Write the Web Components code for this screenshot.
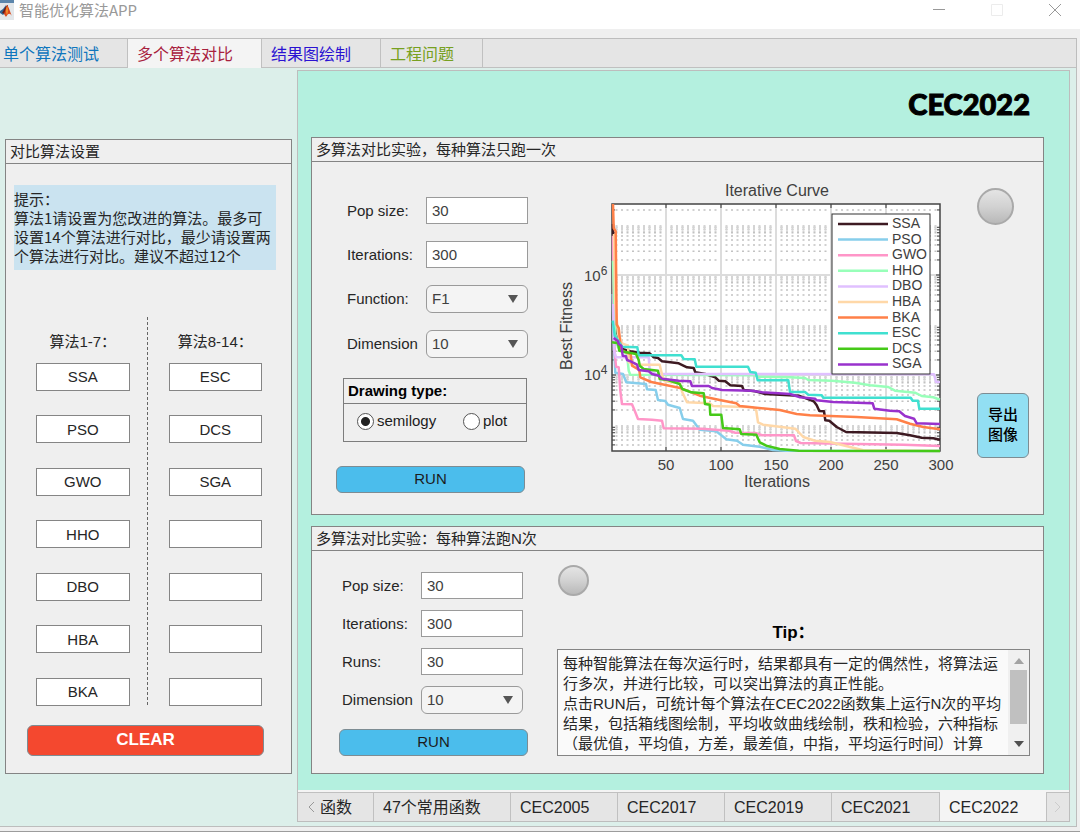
<!DOCTYPE html>
<html lang="zh-CN">
<head>
<meta charset="utf-8">
<title>智能优化算法APP</title>
<style>
  body {
    margin: 0;
    background: #efefef;
    color: #262626;
    font: 15px/20px "Liberation Sans", "Noto Sans CJK SC", sans-serif;
  }
</style>
</head>
<body>
<app-window caption="智能优化算法APP">
  <tab-strip slot="tabs" label="功能">
    <tab-item color="#0f76bd" wide="128">单个算法测试</tab-item>
    <tab-item color="#a8213d" wide="134" selected>多个算法对比</tab-item>
    <tab-item color="#2a12d2" wide="119">结果图绘制</tab-item>
    <tab-item color="#77a020" wide="102">工程问题</tab-item>
  </tab-strip>

  <titled-panel slot="side" caption="对比算法设置">
    <algorithm-settings></algorithm-settings>
  </titled-panel>

  <suite-page caption="CEC2022">
    <titled-panel caption="多算法对比实验，每种算法只跑一次">
      <single-run></single-run>
    </titled-panel>
    <titled-panel caption="多算法对比实验：每种算法跑N次">
      <repeated-run></repeated-run>
    </titled-panel>
    <tab-strip slot="tabs" label="函数集" bottom>
      <tab-item wide="54" tight>函数</tab-item>
      <tab-item wide="137">47个常用函数</tab-item>
      <tab-item wide="107">CEC2005</tab-item>
      <tab-item wide="107">CEC2017</tab-item>
      <tab-item wide="107">CEC2019</tab-item>
      <tab-item wide="108">CEC2021</tab-item>
      <tab-item wide="107" selected>CEC2022</tab-item>
    </tab-strip>
  </suite-page>
</app-window>

<script>
class AppWindow extends HTMLElement {
  constructor() {
    super();
    this.attachShadow({ mode: 'open' });
    this.shadowRoot.innerHTML = `
      <style>
        :host {
          display: flex;
          flex-direction: column;
          min-height: 100vh;
          box-sizing: border-box;
          border-bottom: 1px solid #9c9c9c;
        }
        header {
          display: flex;
          align-items: center;
          height: 29px;
          padding-bottom: 10px;
          box-sizing: border-box;
          background: #fff;
          color: #999;
        }
        .logo { width: 14px; height: 20px; margin-right: 5px; }
        h1 {
          flex: 1;
          margin: 0;
          font: 15px/20px "Noto Sans CJK SC", sans-serif;
        }
        .controls { display: flex; gap: 12px; padding-right: 2px; }
        button {
          width: 46px;
          height: 20px;
          padding: 0;
          border: 0;
          background: none;
          color: #999;
        }
        button[disabled] { color: #ececec; }
        button svg { display: block; margin: auto; }
        main {
          flex: 1;
          display: flex;
          flex-direction: column;
          margin: 9px 3px 4px 0;
          border: 1px solid #bdbdbd;
          border-left: 0;
          background: #dcefea;
        }
        .columns {
          flex: 1;
          display: grid;
          grid-template-columns: 287px minmax(0, 1fr);
          gap: 5px;
          padding: 2px 6px 4px 5px;
        }
        .side { display: flex; padding: 69px 0 48px; }
        .side ::slotted(*) { flex: 1; }
      </style>
      <header>
        <svg class="logo" viewBox="0 0 14 20">
          <rect width="14" height="20" fill="#e3e7ea"/>
          <rect width="14" height="3" fill="#5c86ac"/>
          <path d="M0 11 3 9 6 5 5 13 3 15 0 13z" fill="#2f6694"/>
          <path d="M2 13 6 6 8 5 7 16 5 14z" fill="#6d1a14"/>
          <path d="M7 5C9 7 10 12 12 16 10 13 8 13 6 17L4 14z" fill="#d9481c"/>
          <path d="M7 6C8 9 8 12 7 15 6 13 6 9 7 6z" fill="#f8a633"/>
        </svg>
        <h1></h1>
        <div class="controls">
          <button aria-label="最小化"><svg width="12" height="12" stroke="currentColor"><path d="M0 5.500H12"/></svg></button>
          <button aria-label="最大化" disabled><svg width="12" height="12" fill="none" stroke="currentColor"><path d="M.5.5h11v11H.5z"/></svg></button>
          <button aria-label="关闭"><svg width="12" height="12" stroke="currentColor"><path d="M0 0 12 12M12 0 0 12"/></svg></button>
        </div>
      </header>
      <main>
        <slot name="tabs"></slot>
        <div class="columns">
          <div class="side"><slot name="side"></slot></div>
          <slot></slot>
        </div>
      </main>
    `;
    this.shadowRoot.querySelector('h1').textContent = this.getAttribute('caption');
  }
}

class TabStrip extends HTMLElement {
  constructor() {
    super();
    this.attachShadow({ mode: 'open' });
    const bottom = this.hasAttribute('bottom');
    this.shadowRoot.innerHTML = `
      <style>
        :host {
          display: flex;
          height: 29px;
          background: #e5e5e5;
          box-shadow: inset 0 -1px #c0c0c0;
        }
        :host([bottom]) {
          border-top: 2px solid #f4f4f4;
          box-shadow: inset 0 1px #c0c0c0;
        }
        .tabs { display: flex; flex: 1; min-width: 0; }
        .scroll {
          width: 22px;
          padding: 0;
          border: 0;
          background: none;
          color: #999;
        }
        .scroll svg { display: block; margin: auto; }
        .scroll:first-of-type svg { margin-right: 4px; }
        .scroll[disabled] { color: #ccc; }
        .scroll[disabled] svg { margin: auto; }
      </style>
      ${bottom ? '<button class="scroll" aria-label="向左"><svg width="8" height="12" fill="none" stroke="currentColor"><path d="M6 1 1 6l5 5"/></svg></button>' : ''}
      <div class="tabs" role="tablist"><slot></slot></div>
      ${bottom ? '<button class="scroll" aria-label="向右" disabled><svg width="8" height="12" fill="none" stroke="currentColor"><path d="M1 1l5 5-5 5"/></svg></button>' : ''}
    `;
    this.shadowRoot.querySelector('.tabs').setAttribute('aria-label', this.getAttribute('label'));
  }

  connectedCallback() {
    this.addEventListener('click', (e) => {
      const tab = e.target.closest('tab-item');
      if (!tab) return;
      this.querySelectorAll('tab-item').forEach((item) => item.toggleAttribute('selected', item === tab));
    });
  }
}

class TabItem extends HTMLElement {
  constructor() {
    super();
    this.attachShadow({ mode: 'open' });
    this.shadowRoot.innerHTML = `
      <style>
        :host { display: flex; min-width: 0; }
        button {
          flex: 1;
          padding: 2px 9px 0;
          border: 0;
          border-right: 1px solid #c0c0c0;
          background: none;
          color: #262626;
          font: 16px/27px "Liberation Sans", "Noto Sans CJK SC", sans-serif;
          text-align: left;
          white-space: nowrap;
        }
        :host(:first-child) button { padding-left: 3px; }
        :host([tight]) button { padding-left: 0; }
        :host([selected]) button { background: #f4f4f4; }
      </style>
      <button role="tab"><slot></slot></button>
    `;
    this.button = this.shadowRoot.querySelector('button');
    this.button.style.color = this.getAttribute('color') || '';
    this.style.flexBasis = this.getAttribute('wide') + 'px';
    this.button.setAttribute('aria-selected', this.hasAttribute('selected'));
  }

  static get observedAttributes() {
    return ['selected'];
  }

  attributeChangedCallback() {
    this.button.setAttribute('aria-selected', this.hasAttribute('selected'));
  }
}

class SuitePage extends HTMLElement {
  constructor() {
    super();
    this.attachShadow({ mode: 'open' });
    this.shadowRoot.innerHTML = `
      <style>
        :host {
          display: flex;
          flex-direction: column;
          border: 1px solid #bdbdbd;
          background: #b4f0df;
        }
        h2 {
          margin: 0;
          padding: 17px 39px 17px 0;
          color: #000;
          font: 900 29px/32px Lato, sans-serif;
          text-align: right;
          -webkit-text-stroke: 1px #000;
        }
        .stack {
          flex: 1;
          display: flex;
          flex-direction: column;
          gap: 11px;
          padding: 0 25px 16px 13px;
        }
      </style>
      <h2></h2>
      <div class="stack"><slot></slot></div>
      <slot name="tabs"></slot>
    `;
    this.shadowRoot.querySelector('h2').textContent = this.getAttribute('caption');
  }
}

class TitledPanel extends HTMLElement {
  constructor() {
    super();
    this.attachShadow({ mode: 'open' });
    this.shadowRoot.innerHTML = `
      <style>
        :host {
          display: flex;
          flex-direction: column;
          border: 1px solid #848484;
          background: #efefef;
        }
        h3 {
          margin: 0;
          padding-left: 4px;
          border-bottom: 1px solid #848484;
          font: 15px/23px "Liberation Sans", "Noto Sans CJK SC", sans-serif;
        }
        ::slotted(*) { flex: 1; }
      </style>
      <h3></h3>
      <slot></slot>
    `;
    this.shadowRoot.querySelector('h3').textContent = this.getAttribute('caption');
  }
}

class AlgorithmSettings extends HTMLElement {
  constructor() {
    super();
    this.attachShadow({ mode: 'open' });
    this.shadowRoot.innerHTML = `
      <style>
        :host { display: flex; flex-direction: column; }
        p {
          margin: 21px 15px 0 8px;
          padding: 4px 0 5px;
          background: #cae3f0;
          font: 15px/19px "Noto Sans CJK SC", sans-serif;
        }
        .lists {
          flex: 1;
          display: grid;
          grid-template-columns: minmax(0, 1fr) auto minmax(0, 1fr);
          margin: 47px 29px 0 30px;
        }
        .divider {
          width: 1px;
          margin: 0 21px 0 17px;
          background: repeating-linear-gradient(#666 0 3px, transparent 3px 5px);
        }
        action-button { height: 31px; margin: 18px 27px 17px 21px; }
      </style>
      <p>提示：<br>算法1请设置为您改进的算法。最多可设置14个算法进行对比，最少请设置两个算法进行对比。建议不超过12个</p>
      <div class="lists">
        <algorithm-list label="算法1-7：" names="SSA,PSO,GWO,HHO,DBO,HBA,BKA"></algorithm-list>
        <div class="divider"></div>
        <algorithm-list label="算法8-14：" names="ESC,DCS,SGA,,,,"></algorithm-list>
      </div>
      <action-button kind="clear">CLEAR</action-button>
    `;
    this.shadowRoot.querySelector('action-button').addEventListener('click', () => {
      this.shadowRoot.querySelectorAll('algorithm-list').forEach((list) => list.clear());
    });
  }
}

class AlgorithmList extends HTMLElement {
  connectedCallback() {
    if (this.shadowRoot) return;
    this.attachShadow({ mode: 'open' });
    const label = this.getAttribute('label');
    const inputs = this.getAttribute('names').split(',')
      .map((name, i) => `<input value="${name}" aria-label="${label}${i + 1}">`)
      .join('');
    this.shadowRoot.innerHTML = `
      <style>
        :host {
          display: flex;
          flex-direction: column;
          justify-content: space-between;
          padding: 15px 0 1px;
        }
        span { margin-bottom: -14px; text-align: center; white-space: nowrap; }
        input {
          width: 100%;
          height: 28px;
          box-sizing: border-box;
          border: 1px solid #858585;
          background: #fff;
          color: #262626;
          font: inherit;
          text-align: center;
        }
      </style>
      <span>${label}</span>
      ${inputs}
    `;
  }

  clear() {
    this.shadowRoot.querySelectorAll('input').forEach((input) => { input.value = ''; });
  }
}

class ActionButton extends HTMLElement {
  constructor() {
    super();
    this.attachShadow({ mode: 'open' });
    this.shadowRoot.innerHTML = `
      <style>
        :host { display: flex; height: 27px; }
        button {
          flex: 1;
          padding: 0 0 2px;
          border: 1px solid #7d8c93;
          border-radius: 6px;
          background: #4bbdec;
          color: #1c1c1c;
          font: inherit;
        }
        :host([kind=clear]) button {
          background: #f4482f;
          color: #fff;
          font-weight: bold;
          font-size: 17px;
        }
        :host([kind=export]) button { background: #92dff3; color: #000; font-weight: 500; }
      </style>
      <button><slot></slot></button>
    `;
  }
}

class FormField extends HTMLElement {
  connectedCallback() {
    if (this.shadowRoot) return;
    this.attachShadow({ mode: 'open' });
    const value = this.getAttribute('value');
    const control = this.hasAttribute('options')
      ? `<select id="control">${this.getAttribute('options').split(',').map((o) => `<option>${o}</option>`).join('')}</select>
         <svg width="12" height="10" viewBox="0 0 12 10"><path d="M1 1h10L6 9z" fill="#555"/></svg>`
      : `<input id="control" value="${value}">`;
    this.shadowRoot.innerHTML = `
      <style>
        :host {
          display: grid;
          grid-template-columns: 79px minmax(0, 1fr);
          align-items: center;
        }
        .control { position: relative; }
        input, select {
          display: block;
          width: 100%;
          height: 27px;
          padding: 0 5px;
          box-sizing: border-box;
          border: 1px solid #9a9a9a;
          background: #fff;
          color: #404040;
          font: inherit;
        }
        select {
          height: 28px;
          appearance: none;
          border-radius: 6px;
          background: #f4f4f4;
        }
        svg { position: absolute; top: 9px; right: 9px; pointer-events: none; }
      </style>
      <label for="control">${this.getAttribute('label')}</label>
      <div class="control">${control}</div>
    `;
  }
}

class StatusLamp extends HTMLElement {
  constructor() {
    super();
    this.attachShadow({ mode: 'open' });
    this.shadowRoot.innerHTML = `
      <style>
        :host {
          display: block;
          width: 31px;
          height: 31px;
          box-sizing: border-box;
          border: 2px solid #a9a9a9;
          border-radius: 50%;
          background: linear-gradient(#e4e4e4, #d2d2d2 50%, #b9b9b9);
        }
        :host([large]) { width: 37px; height: 37px; }
      </style>
    `;
  }
}

class DrawingType extends HTMLElement {
  constructor() {
    super();
    this.attachShadow({ mode: 'open' });
    this.shadowRoot.innerHTML = `
      <style>
        :host { display: block; border: 1px solid #7d7d7d; color: #1c1c1c; }
        #title {
          padding-left: 4px;
          border-bottom: 1px solid #7d7d7d;
          color: #000;
          font-weight: bold;
          line-height: 24px;
        }
        .options {
          display: grid;
          grid-template-columns: 106px auto;
          height: 34px;
          padding: 0 0 3px 13px;
        }
        label { display: flex; align-items: center; gap: 3px; }
        input {
          appearance: none;
          width: 17px;
          height: 17px;
          margin: 0;
          border: 1px solid #555;
          border-radius: 50%;
          background: #fff;
        }
        input:checked { background: radial-gradient(circle, #222 4px, #fff 5px); }
      </style>
      <div id="title">Drawing type:</div>
      <div class="options" role="radiogroup" aria-labelledby="title">
        <label><input type="radio" name="type" checked>semilogy</label>
        <label><input type="radio" name="type">plot</label>
      </div>
    `;
  }
}

class SingleRun extends HTMLElement {
  constructor() {
    super();
    this.attachShadow({ mode: 'open' });
    this.shadowRoot.innerHTML = `
      <style>
        :host {
          display: grid;
          grid-template-columns: 192px minmax(0, 1fr) 52px;
          padding: 18px 14px 21px 24px;
        }
        .fields { display: grid; gap: 17px; padding: 17px 0 0 11px; }
        drawing-type { margin: 20px 1px 24px 7px; }
        .form action-button { margin-right: 3px; }
        fitness-chart { margin: 0 25px 0 24px; }
        .side {
          display: flex;
          flex-direction: column;
          justify-content: space-between;
          padding: 8px 0 35px;
        }
        .side action-button { height: 65px; }
      </style>
      <div class="form">
        <div class="fields">
          <form-field label="Pop size:" value="30"></form-field>
          <form-field label="Iterations:" value="300"></form-field>
          <form-field label="Function:" options="F1"></form-field>
          <form-field label="Dimension" options="10"></form-field>
        </div>
        <drawing-type></drawing-type>
        <action-button>RUN</action-button>
      </div>
      <fitness-chart></fitness-chart>
      <div class="side">
        <status-lamp large></status-lamp>
        <action-button kind="export">导出<br>图像</action-button>
      </div>
    `;
  }
}

class RepeatedRun extends HTMLElement {
  constructor() {
    super();
    this.attachShadow({ mode: 'open' });
    this.shadowRoot.innerHTML = `
      <style>
        :host {
          display: grid;
          grid-template-columns: 189px minmax(0, 1fr);
          gap: 29px;
          padding: 14px 13px 17px 27px;
        }
        .fields { display: grid; gap: 11px; padding: 7px 5px 15px 3px; }
        .tip { display: flex; flex-direction: column; }
        status-lamp { margin-left: 1px; }
        label {
          margin: 25px 0 4px;
          color: #000;
          font-weight: bold;
          font-size: 17px;
          line-height: 24px;
          text-align: center;
        }
        .box {
          flex: 1;
          display: flex;
          border: 1px solid #848484;
          background: #fafafa;
        }
        textarea {
          flex: 1;
          min-width: 0;
          padding: 4px 0 0 5px;
          border: 0;
          background: none;
          color: #262626;
          font: 15px/20px "Liberation Sans", "Noto Sans CJK SC", sans-serif;
          overflow: hidden;
          resize: none;
        }
        .scrollbar {
          display: flex;
          flex-direction: column;
          align-items: center;
          width: 21px;
          padding: 8px 0;
          box-sizing: border-box;
          background: #f0f0f0;
        }
        .thumb { width: 17px; height: 54px; margin: 6px 0 auto; background: #c0c0c0; }
      </style>
      <div class="form">
        <div class="fields">
          <form-field label="Pop size:" value="30"></form-field>
          <form-field label="Iterations:" value="300"></form-field>
          <form-field label="Runs:" value="30"></form-field>
          <form-field label="Dimension" options="10"></form-field>
        </div>
        <action-button>RUN</action-button>
      </div>
      <div class="tip">
        <status-lamp></status-lamp>
        <label for="note">Tip：</label>
        <div class="box">
          <textarea id="note" rows="5" readonly>每种智能算法在每次运行时，结果都具有一定的偶然性，将算法运行多次，并进行比较，可以突出算法的真正性能。
点击RUN后，可统计每个算法在CEC2022函数集上运行N次的平均结果，包括箱线图绘制，平均收敛曲线绘制，秩和检验，六种指标（最优值，平均值，方差，最差值，中指，平均运行时间）计算</textarea>
          <div class="scrollbar">
            <svg width="10" height="6"><path d="M0 6h10L5 0z" fill="#a3a3a3"/></svg>
            <div class="thumb"></div>
            <svg width="10" height="6"><path d="M0 0h10L5 6z" fill="#505050"/></svg>
          </div>
        </div>
      </div>
    `;
  }
}

// Curve points are kept in thirds of a plot unit, from the top left of the axes
const SCALE = 3;
const PLOT = { x: 60, y: 24, width: 328, height: 247 };
const SERIES = [
  { name: 'SSA', color: '#3d1a22', points: '3,60 6,330 14,415 30,435 55,442 83,446 113,448 125,460 138,462 150,472 200,478 225,490 245,492 250,505 280,510 310,520 320,530 340,532 355,544 390,546 395,558 430,562 460,570 560,575 584,584 605,592 614,604 622,621 636,622 640,649 652,650 674,669 702,684 854,687 894,694 929,701 964,703 984,707' },
  { name: 'PSO', color: '#87ceeb', points: '2,270 5,400 10,506 33,510 43,535 102,540 105,556 131,558 138,588 160,591 168,602 203,612 213,645 243,650 263,677 313,682 343,706 375,710 393,722 443,728 483,738 520,740 984,741' },
  { name: 'GWO', color: '#ff96c8', points: '3,95 6,420 12,488 20,490 25,560 30,600 60,601 68,620 78,645 120,647 150,650 155,673 270,674 350,680 370,686 430,687 450,694 546,694 552,711 566,717 694,719 874,722 984,726' },
  { name: 'HHO', color: '#98ffb9', points: '3,170 6,280 10,390 18,430 45,450 50,500 55,512 430,514 440,518 534,520 579,522 589,528 660,530 729,536 774,544 829,549 849,560 909,566 929,576 964,580 984,587' },
  { name: 'DBO', color: '#e0c0ff', points: '4,300 6,440 12,460 110,460 113,500 132,510 966,511 972,534 984,534' },
  { name: 'HBA', color: '#ffd8a8', points: '6,90 10,300 18,385 30,418 48,425 50,475 78,482 143,482 151,515 158,532 203,538 211,565 225,595 293,598 303,606 423,610 433,620 438,655 453,662 503,668 550,674 574,699 609,710 654,714 714,729 754,739 984,741' },
  { name: 'BKA', color: '#ff8048', points: '3,0 5,72 11,82 14,362 20,372 27,440 40,444 56,450 60,485 82,498 85,520 118,534 208,553 263,575 323,588 373,598 383,606 503,618 554,630 594,634 734,639 854,646 894,659 934,669 984,676' },
  { name: 'ESC', color: '#40e0d0', points: '2,350 8,395 20,412 30,428 76,430 80,454 208,454 215,465 248,466 253,488 408,488 415,504 431,506 437,529 529,529 534,564 579,564 589,572 629,574 634,581 896,581 902,590 918,590 922,614 984,614' },
  { name: 'DCS', color: '#45c918', points: '0,415 18,418 22,440 40,444 72,450 80,468 83,485 95,495 138,500 143,525 168,528 203,540 211,555 238,565 275,568 279,600 293,602 295,632 328,632 333,672 383,676 388,690 433,692 443,715 463,725 503,735 560,740 984,741' },
  { name: 'SGA', color: '#9932cc', points: '5,402 18,412 20,420 28,425 32,455 42,457 45,468 58,473 75,482 80,498 110,502 120,510 140,515 150,524 200,530 235,532 240,546 290,546 300,552 330,558 420,560 450,565 534,570 564,580 609,584 614,589 664,594 782,598 787,614 834,620 862,622 879,636 906,644 914,658 984,660' }
];

class FitnessChart extends HTMLElement {
  constructor() {
    super();
    this.attachShadow({ mode: 'open' });
    this.shadowRoot.innerHTML = `
      <style>
        :host { display: block; }
        svg { display: block; width: 100%; overflow: visible; }
        text { fill: #404040; font-family: "Liberation Sans", sans-serif; font-size: 15px; }
        .title { font-size: 16px; text-anchor: middle; }
        .tick { text-anchor: middle; }
        .power { font-size: 12px; }
        .legend { font-size: 14px; }
        .major { stroke: #dcdcdc; stroke-width: 2; }
        .dots { stroke: #c2c2c2; stroke-width: 1.5; stroke-dasharray: 2 3.5; }
        .dense { stroke: #d4d4d4; stroke-width: 2; stroke-dasharray: 5 1; }
        .frame { fill: none; stroke: #444; stroke-width: 1.5; }
        polyline { fill: none; stroke-width: 2.5; stroke-linejoin: round; }
      </style>
      <svg viewBox="0 0 400 310" role="img" aria-label="Iterative Curve">
        <rect x="${PLOT.x}" y="${PLOT.y}" width="${PLOT.width}" height="${PLOT.height}" fill="#fff"/>
        ${this.grid()}
        <rect class="frame" x="${PLOT.x}" y="${PLOT.y}" width="${PLOT.width}" height="${PLOT.height}"/>
        ${SERIES.map((s) => this.curve(s)).join('')}
        ${this.legend()}
        <text class="title" x="225" y="16">Iterative Curve</text>
        <text class="title" x="225" y="307">Iterations</text>
        <text class="title" transform="translate(20 146) rotate(-90)">Best Fitness</text>
        <text x="32" y="101">10<tspan class="power" dy="-6">6</tspan></text>
        <text x="32" y="200">10<tspan class="power" dy="-6">4</tspan></text>
      </svg>
    `;
  }

  iterationX(n) {
    return PLOT.x - 1 + n * 1.1;
  }

  fitnessY(exponent) {
    return 95 + (6 - exponent) * 50;
  }

  grid() {
    const right = PLOT.x + PLOT.width;
    const bottom = PLOT.y + PLOT.height;
    let dots = '';
    let dense = '';
    let major = '';
    let ticks = '';
    for (let e = 2; e < 8; e++) {
      for (let m = 2; m < 10; m++) {
        const y = this.fitnessY(e + Math.log10(m));
        if (y > PLOT.y && y < bottom) {
          dots += `M${this.iterationX(5) - 1} ${y}H${right}`;
          ticks += `M${PLOT.x} ${y}h3M${right} ${y}h-3`;
        }
      }
    }
    // the last lines of each decade run together into short columns
    for (let e = 3; e <= 7; e++) {
      for (let n = 5; n < 300; n += 5) {
        if (n % 50) dense += `M${this.iterationX(n)} ${this.fitnessY(e)}v7`;
      }
    }
    for (let n = 50; n < 300; n += 50) {
      const x = this.iterationX(n);
      major += `M${x} ${PLOT.y}V${bottom}`;
      ticks += `M${x} ${PLOT.y}v4M${x} ${bottom}v-4`;
    }
    [6, 4].forEach((e) => {
      major += `M${PLOT.x} ${this.fitnessY(e)}H${right}`;
      ticks += `M${PLOT.x} ${this.fitnessY(e)}h4M${right} ${this.fitnessY(e)}h-4`;
    });
    const labels = [50, 100, 150, 200, 250, 300]
      .map((n) => `<text class="tick" x="${this.iterationX(n)}" y="290">${n}</text>`)
      .join('');
    return `
      <path class="dots" d="${dots}"/>
      <path class="dense" d="${dense}"/>
      <path class="major" d="${major}"/>
      <path d="${ticks}" stroke="#333"/>
      ${labels}
    `;
  }

  curve({ color, points }) {
    const scaled = points.split(' ').map((pair) => {
      const [x, y] = pair.split(',');
      return `${(PLOT.x + x / SCALE).toFixed(1)},${(PLOT.y + y / SCALE).toFixed(1)}`;
    });
    return `<polyline points="${scaled.join(' ')}" stroke="${color}"/>`;
  }

  legend() {
    const rows = SERIES.map(({ name, color }, i) => {
      const y = 44 + i * 15.6;
      return `<path d="M286 ${y}h50" stroke="${color}" stroke-width="2.500"/>
        <text class="legend" x="340" y="${y + 4}">${name}</text>`;
    }).join('');
    return `<rect x="280" y="34" width="98" height="160" fill="#fff" stroke="#333"/>${rows}`;
  }
}

customElements.define('algorithm-list', AlgorithmList);
customElements.define('action-button', ActionButton);
customElements.define('form-field', FormField);
customElements.define('status-lamp', StatusLamp);
customElements.define('drawing-type', DrawingType);
customElements.define('fitness-chart', FitnessChart);
customElements.define('algorithm-settings', AlgorithmSettings);
customElements.define('single-run', SingleRun);
customElements.define('repeated-run', RepeatedRun);
customElements.define('titled-panel', TitledPanel);
customElements.define('suite-page', SuitePage);
customElements.define('tab-item', TabItem);
customElements.define('tab-strip', TabStrip);
customElements.define('app-window', AppWindow);
</script>
</body>
</html>
